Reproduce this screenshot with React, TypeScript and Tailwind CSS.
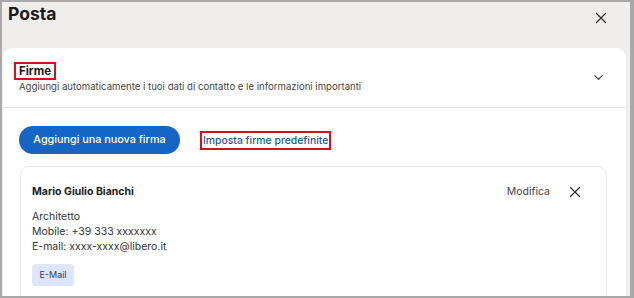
import { X, ChevronDown } from 'lucide-react';

export default function App() {
  return (
    <div
      className="w-[634px] h-[298px] overflow-hidden border-l-2 border-t-2 border-b-2 border-r-4 border-[#a9a9a9] bg-[#efeeed] text-[#1b1b1b]"
      style={{ fontFamily: 'Inter, "Noto Sans", sans-serif' }}
    >
      {/* Header */}
      <div className="h-[46px] flex items-start justify-between pl-[6px] pr-[20px]">
        <h1 className="text-[17.5px] leading-[24px] font-bold">Posta</h1>
        <X className="w-[18px] h-[18px] mt-[7px] text-[#333]" strokeWidth={1.7} />
      </div>

      {/* Main card */}
      <div className="ml-[1px] mr-[4px] bg-white rounded-t-[10px] h-[260px]">
        <div className="flex items-center justify-between pl-[11px] pr-[20px] pt-[14px] pb-[14px] border-b border-[#e6e6e6]">
          <div>
            <span className="block w-fit text-[11.5px] leading-[14px] font-bold px-[3px] border-2 border-[#d0131a]">Firme</span>
            <p className="text-[9.6px] leading-[13px] text-[#444] pl-[5px]">
              Aggiungi automaticamente i tuoi dati di contatto e le informazioni importanti
            </p>
          </div>
          <ChevronDown className="w-[15px] h-[15px] text-[#444]" strokeWidth={2} />
        </div>

        <div className="pl-[16px] pr-[16px] pt-[18px]">
          <div className="flex items-center gap-[20px]">
            <button className="h-[28px] w-[161px] rounded-full bg-[#1565c4] text-white text-[10.8px] font-medium">
              Aggiungi una nuova firma
            </button>
            <span className="text-[10.4px] font-medium text-[#2a5797] border-2 border-[#d0131a] px-[1px] leading-[15px]">
              Imposta firme predefinite
            </span>
          </div>

          <div className="mt-[12px] mr-[3px] ml-[1px] border border-[#e8e8e8] rounded-[9px] h-[160px] pl-[11px] pr-[22px] pt-[17px]">
            <div className="flex items-center justify-between h-[15px]">
              <span className="text-[10.5px] font-bold leading-[15px]">Mario Giulio Bianchi</span>
              <div className="flex items-center gap-[16px]">
                <span className="text-[10.5px] text-[#444]">Modifica</span>
                <X className="w-[18px] h-[18px] text-[#333]" strokeWidth={1.7} />
              </div>
            </div>
            <div className="mt-[10px] text-[10.5px] leading-[15px] text-[#333]">
              <p>Architetto</p>
              <p>Mobile: +39 333 xxxxxxx</p>
              <p>E-mail: xxxx-xxxx@libero.it</p>
            </div>
            <span className="inline-flex items-center justify-center mt-[10px] h-[22px] w-[42px] rounded-[4px] bg-[#dde5fa] text-[9px] text-[#2f3e5c]">
              E-Mail
            </span>
          </div>
        </div>
      </div>
    </div>
  );
}
